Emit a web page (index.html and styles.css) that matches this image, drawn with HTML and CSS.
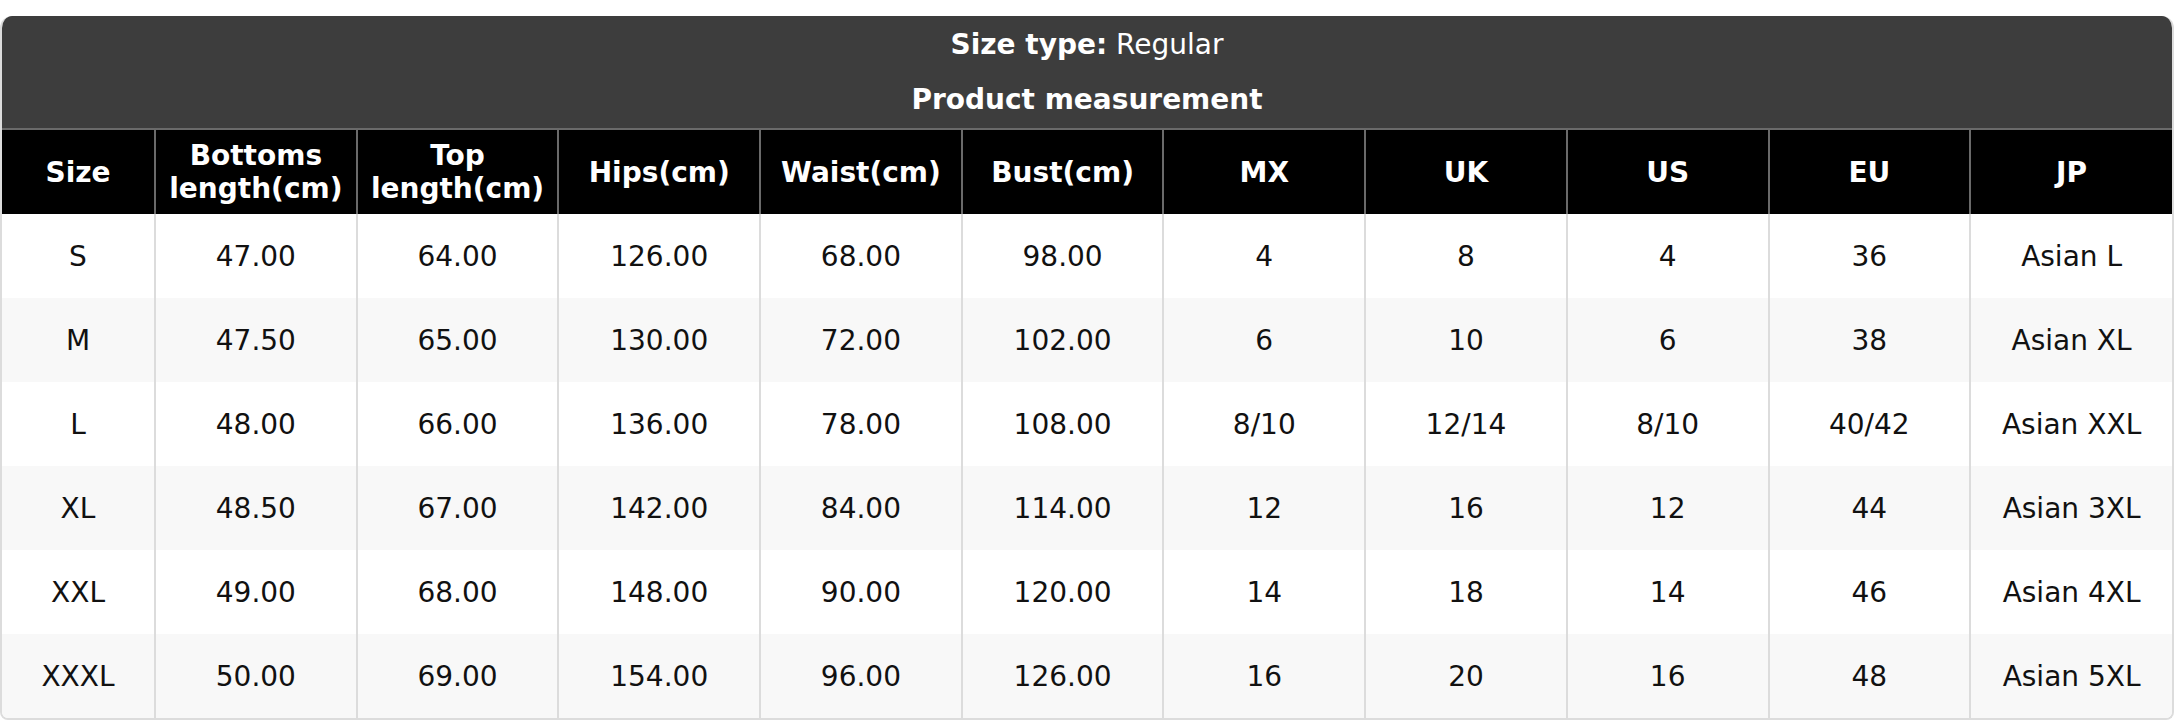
FILE: index.html
```html
<!DOCTYPE html>
<html>
<head>
<meta charset="utf-8">
<link rel="stylesheet" href="styles.css">
</head>
<body>
<div class="chart">
  <div class="title">
    <div class="title-line"><b>Size type:</b> Regular</div>
    <div class="title-line"><b>Product measurement</b></div>
  </div>
  <table class="sizes">
    <colgroup>
      <col class="c-size"><col><col><col><col><col><col><col><col><col><col>
    </colgroup>
    <thead>
      <tr>
        <th>Size</th><th>Bottoms<br>length(cm)</th><th>Top<br>length(cm)</th><th>Hips(cm)</th><th>Waist(cm)</th><th>Bust(cm)</th><th>MX</th><th>UK</th><th>US</th><th>EU</th><th>JP</th>
      </tr>
    </thead>
    <tbody>
      <tr><td>S</td><td>47.00</td><td>64.00</td><td>126.00</td><td>68.00</td><td>98.00</td><td>4</td><td>8</td><td>4</td><td>36</td><td>Asian L</td></tr>
      <tr><td>M</td><td>47.50</td><td>65.00</td><td>130.00</td><td>72.00</td><td>102.00</td><td>6</td><td>10</td><td>6</td><td>38</td><td>Asian XL</td></tr>
      <tr><td>L</td><td>48.00</td><td>66.00</td><td>136.00</td><td>78.00</td><td>108.00</td><td>8/10</td><td>12/14</td><td>8/10</td><td>40/42</td><td>Asian XXL</td></tr>
      <tr><td>XL</td><td>48.50</td><td>67.00</td><td>142.00</td><td>84.00</td><td>114.00</td><td>12</td><td>16</td><td>12</td><td>44</td><td>Asian 3XL</td></tr>
      <tr><td>XXL</td><td>49.00</td><td>68.00</td><td>148.00</td><td>90.00</td><td>120.00</td><td>14</td><td>18</td><td>14</td><td>46</td><td>Asian 4XL</td></tr>
      <tr><td>XXXL</td><td>50.00</td><td>69.00</td><td>154.00</td><td>96.00</td><td>126.00</td><td>16</td><td>20</td><td>16</td><td>48</td><td>Asian 5XL</td></tr>
    </tbody>
  </table>
</div>
</body>
</html>
```

FILE: styles.css
```css
html, body {
  margin: 0;
  padding: 0;
  background: #fff;
}
body {
  padding-top: 16px;
  font-family: "DejaVu Sans", sans-serif;
  font-size: 28px;
  color: #111;
}
.chart {
  width: 2174px;
  box-sizing: border-box;
  border: 2px solid #dcdcdc;
  border-top: none;
  border-radius: 12px 12px 8px 8px;
  overflow: hidden;
}
.title {
  background: #3d3d3d;
  color: #fff;
  text-align: center;
  border-bottom: 2px solid #6a6a6a;
}
.title-line {
  height: 56px;
  line-height: 56px;
}
.title-line:first-child {
  line-height: 58px;
}
.title-line:last-child {
  line-height: 56px;
}
.sizes {
  width: 100%;
  border-collapse: collapse;
  table-layout: fixed;
}
.c-size {
  width: 153px;
}
.sizes th {
  background: #000;
  color: #fff;
  font-weight: bold;
  line-height: 33px;
  height: 84px;
  padding: 0 4px;
  box-sizing: border-box;
  border-left: 2px solid #6a6a6a;
  border-right: 2px solid #6a6a6a;
  text-align: center;
  vertical-align: middle;
}
.sizes td {
  height: 84px;
  padding: 2px 4px 0;
  box-sizing: border-box;
  line-height: 34px;
  text-align: center;
  vertical-align: middle;
  border-left: 2px solid #dcdcdc;
  border-right: 2px solid #dcdcdc;
}
.sizes th:first-child, .sizes td:first-child {
  border-left: none;
}
.sizes th:last-child, .sizes td:last-child {
  border-right: none;
}
.sizes tbody tr:nth-child(even) td {
  background: #f8f8f8;
}
```
